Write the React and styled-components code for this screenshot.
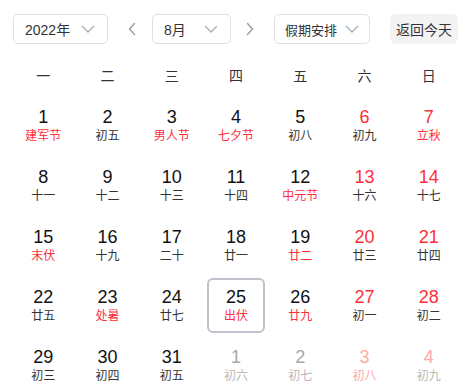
import styled, { createGlobalStyle } from "styled-components";

const GlobalStyle = createGlobalStyle`
    body {
        margin: 0;
        background: #fff;
        font-family: "Liberation Sans", "Noto Sans CJK SC", sans-serif;
        color: #333;
    }
`

const Wrapper = styled.div`
    width: 466px;
    height: 386px;
    overflow: hidden;
    padding: 14px 5px 0 11px;
    box-sizing: border-box;
`

const Toolbar = styled.div`
    display: flex;
    align-items: center;
    height: 30px;
`

const SelectBox = styled.div`
    display: flex;
    align-items: center;
    justify-content: space-between;
    box-sizing: border-box;
    width: ${p => p.$w}px;
    height: 30px;
    margin-left: ${p => p.$ml || 0}px;
    padding: 0 ${p => p.$pr || 11}px 0 ${p => p.$pl || 11}px;
    border: 1px solid #dcdfe6;
    border-radius: 5px;
    font-size: 14px;
    color: #333;
`

const SelectText = styled.span`
    font-family: ${p => (p.$cjk ? "'Noto Sans CJK SC', sans-serif" : "inherit")};
    font-size: ${p => (p.$cjk ? 13 : 14)}px;
    white-space: nowrap;
`

const NavArrow = styled.button`
    display: flex;
    align-items: center;
    justify-content: center;
    width: 24px;
    height: 30px;
    padding: 0;
    margin-left: ${p => p.$ml}px;
    border: none;
    background: none;
`

const TodayButton = styled.button`
    margin-left: ${p => p.$ml}px;
    width: 68px;
    height: 30px;
    padding: 0;
    border: none;
    border-radius: 6px;
    background: #f3f3f4;
    font-family: inherit;
    font-size: 14px;
    color: #333;
`

const WeekRow = styled.div`
    display: grid;
    grid-template-columns: repeat(7, 1fr);
    margin-top: 16px;
    height: 30px;
    align-items: center;
`

const WeekLabel = styled.div`
    text-align: center;
    font-size: 14px;
    color: #333;
`

const DayGrid = styled.div`
    display: grid;
    grid-template-columns: repeat(7, 1fr);
    grid-auto-rows: 60px;
    margin-top: 5px;
    align-items: center;
    justify-items: center;
`

const DayCell = styled.div`
    width: 58px;
    height: 55px;
    box-sizing: border-box;
    display: flex;
    flex-direction: column;
    align-items: center;
    border: 2px solid ${p => (p.$today ? "#c0c2cc" : "transparent")};
    border-radius: 6px;
    padding-top: 6px;
`

const numColor = (red, other) => {
    if (other) return red ? "#ffa8a8" : "#a8a8a8";
    return red ? "#ff2e3b" : "#111";
};

const DayNum = styled.span`
    font-size: 18px;
    line-height: 22px;
    color: ${p => numColor(p.$red, p.$other)};
`

const Lunar = styled.span`
    font-family: "Noto Sans CJK SC", sans-serif;
    font-size: 12px;
    line-height: 14px;
    color: ${p => (p.$other ? (p.$red ? "#ffa8a8" : "#b8b8b8") : p.$red ? "#ff2e3b" : "#333")};
`

const Chevron = ({ size = 16, color = "#a8abb2" }) => (
    <svg width={size} height={size} viewBox="0 0 16 16" fill="none">
        <path d="M2.5 5.5l5.5 5.5 5.5-5.5" stroke={color} strokeWidth="1.3" strokeLinecap="round" strokeLinejoin="round" />
    </svg>
);

const Arrow = ({ dir }) => (
    <svg width="10" height="16" viewBox="0 0 10 16" fill="none">
        <path
            d={dir === "left" ? "M7.5 2.5L2.5 8l5 5.5" : "M2.5 2.5L7.5 8l-5 5.5"}
            stroke="#9a9ca4"
            strokeWidth="1.4"
            strokeLinecap="round"
            strokeLinejoin="round"
        />
    </svg>
);

const weekdays = ["一", "二", "三", "四", "五", "六", "日"];

// [day, lunar, numberRed, lunarRed, otherMonth, today]
const days = [
    [1, "建军节", 0, 1], [2, "初五"], [3, "男人节", 0, 1], [4, "七夕节", 0, 1], [5, "初八"], [6, "初九", 1], [7, "立秋", 1, 1],
    [8, "十一"], [9, "十二"], [10, "十三"], [11, "十四"], [12, "中元节", 0, 1], [13, "十六", 1], [14, "十七", 1],
    [15, "末伏", 0, 1], [16, "十九"], [17, "二十"], [18, "廿一"], [19, "廿二", 0, 1], [20, "廿三", 1], [21, "廿四", 1],
    [22, "廿五"], [23, "处暑", 0, 1], [24, "廿七"], [25, "出伏", 0, 1, 0, 1], [26, "廿九", 0, 1], [27, "初一", 1], [28, "初二", 1],
    [29, "初三"], [30, "初四"], [31, "初五"], [1, "初六", 0, 0, 1], [2, "初七", 0, 0, 1], [3, "初八", 1, 1, 1], [4, "初九", 1, 0, 1],
];

const App = () => {
    return <Wrapper>
        <GlobalStyle />
        <Toolbar>
            <SelectBox $w={95} $ml={2}>
                <SelectText>2022年</SelectText>
                <Chevron />
            </SelectBox>
            <NavArrow $ml={12}><Arrow dir="left" /></NavArrow>
            <SelectBox $w={79} $ml={8}>
                <SelectText>8月</SelectText>
                <Chevron />
            </SelectBox>
            <NavArrow $ml={7}><Arrow dir="right" /></NavArrow>
            <SelectBox $w={96} $ml={12} $pl={10} $pr={9}>
                <SelectText $cjk>假期安排</SelectText>
                <Chevron />
            </SelectBox>
            <TodayButton $ml={20}>返回今天</TodayButton>
        </Toolbar>
        <WeekRow>
            {weekdays.map(w => <WeekLabel key={w}>{w}</WeekLabel>)}
        </WeekRow>
        <DayGrid>
            {days.map(([d, lunar, red, lunarRed, other, today], i) => (
                <DayCell key={i} $today={!!today}>
                    <DayNum $red={!!red} $other={!!other}>{d}</DayNum>
                    <Lunar $red={!!lunarRed} $other={!!other}>{lunar}</Lunar>
                </DayCell>
            ))}
        </DayGrid>
    </Wrapper>;
};

export default App;
